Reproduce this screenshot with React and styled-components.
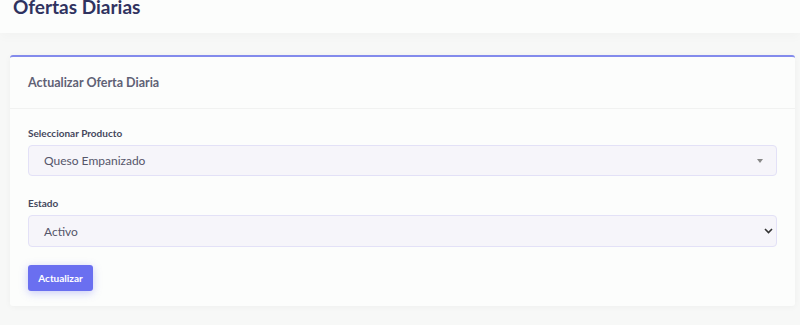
import React from "react";
import styled, {createGlobalStyle} from "styled-components";

const GlobalStyle = createGlobalStyle`
    html, body {
        margin: 0;
        padding: 0;
        background: #f7f8f7;
        font-family: Lato, "Open Sans", sans-serif;
    }
`;

const Page = styled.div`
    width: 800px;
    height: 325px;
    overflow: hidden;
    background: #f7f8f7;
`;

const TopBar = styled.header`
    height: 33px;
    background: #fcfdfc;
    padding: 0 13px;
    box-shadow: 0 4px 10px rgba(0, 0, 0, 0.025);
    overflow: hidden;
`;

const PageTitle = styled.h1`
    margin: -5px 0 0;
    font-size: 19px;
    line-height: 24px;
    font-weight: 700;
    color: #2f325f;
`;

const Card = styled.section`
    margin: 22px 5px 0 10px;
    background: #fcfdfc;
    border-top: 2px solid #838bec;
    border-radius: 3px;
    box-shadow: 0 1px 6px rgba(0, 0, 0, 0.04);
`;

const CardHeader = styled.div`
    height: 51px;
    display: flex;
    align-items: center;
    padding: 0 18px;
    border-bottom: 1px solid #f1f2f1;
`;

const CardTitle = styled.h4`
    margin: 0;
    font-size: 12.5px;
    font-weight: 700;
    color: #5f6175;
`;

const CardBody = styled.div`
    padding: 17px 18px 15px;
    display: flex;
    flex-direction: column;
`;

const Field = styled.div`
    display: flex;
    flex-direction: column;
    gap: 5px;
    margin-bottom: ${(p) => p.$gap || 0}px;
`;

const Label = styled.label`
    font-size: 10px;
    line-height: 14px;
    font-weight: 700;
    color: #45475c;
`;

const SelectBox = styled.div`
    height: ${(p) => p.$h || 31}px;
    box-sizing: border-box;
    display: flex;
    align-items: center;
    justify-content: space-between;
    padding: 0 ${(p) => p.$pr || 14}px 0 15px;
    background: #f6f5fa;
    border: 1px solid #e3e1f7;
    border-radius: 4px;
    font-size: 12px;
    color: #55566a;
`;

const Caret = styled.span`
    width: 0;
    height: 0;
    border-left: 3px solid transparent;
    border-right: 3px solid transparent;
    border-top: 4px solid #888;
    margin-top: 1px;
`;

const Button = styled.button`
    align-self: flex-start;
    width: 65px;
    height: 26px;
    border: none;
    border-radius: 3px;
    background: #6a6ff0;
    color: #fff;
    font-family: inherit;
    font-size: 10px;
    font-weight: 700;
    box-shadow: 0 2px 8px rgba(106, 111, 240, 0.35);
    cursor: pointer;
`;

const Chevron = () => (
    <svg width="9" height="6" viewBox="0 0 9 6">
        <path d="M1 1l3.5 3.5L8 1" fill="none" stroke="#333" strokeWidth="1.6" />
    </svg>
);

const App = () => {
    return (
        <Page>
            <GlobalStyle />
            <TopBar>
                <PageTitle>Ofertas Diarias</PageTitle>
            </TopBar>
            <Card>
                <CardHeader>
                    <CardTitle>Actualizar Oferta Diaria</CardTitle>
                </CardHeader>
                <CardBody>
                    <Field $gap={20}>
                        <Label>Seleccionar Producto</Label>
                        <SelectBox $pr={13}>
                            <span>Queso Empanizado</span>
                            <Caret />
                        </SelectBox>
                    </Field>
                    <Field $gap={18}>
                        <Label>Estado</Label>
                        <SelectBox $h={32} $pr={3}>
                            <span>Activo</span>
                            <Chevron />
                        </SelectBox>
                    </Field>
                    <Button>Actualizar</Button>
                </CardBody>
            </Card>
        </Page>
    );
};

export default App;
